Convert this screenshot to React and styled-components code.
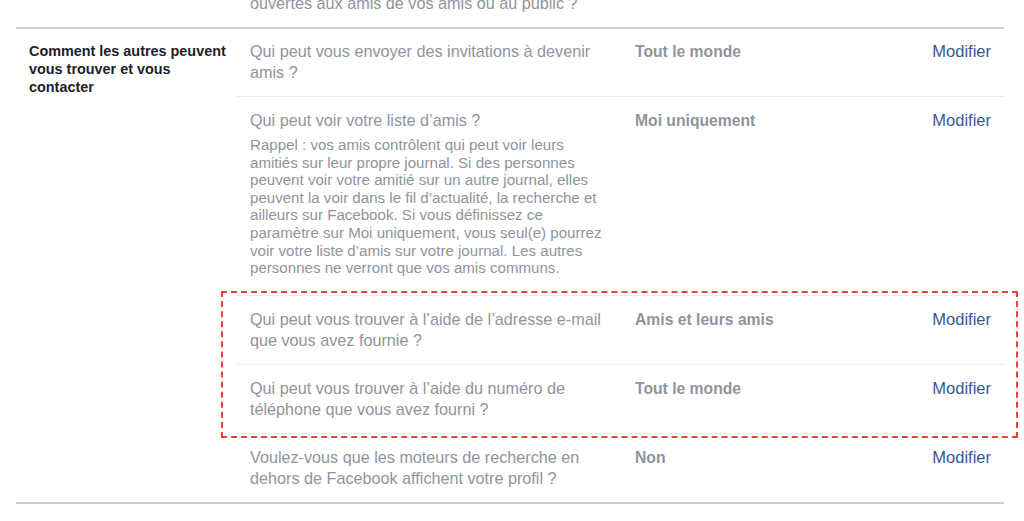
import React from 'react';
import styled, { createGlobalStyle } from 'styled-components';

const GlobalStyle = createGlobalStyle`
  html, body {
    margin: 0;
    padding: 0;
    background: #ffffff;
    overflow: hidden;
  }
  body {
    font-family: "Liberation Sans", Arial, Helvetica, sans-serif;
    -webkit-font-smoothing: antialiased;
  }
`;

const Page = styled.div`
  margin: -20px 20px 0 16px;
  width: 988px;
`;

const Section = styled.div`
  display: flex;
  border-bottom: 2px solid #cfcfd1;
`;

const SectionTitle = styled.div`
  width: 221px;
  flex-shrink: 0;
  box-sizing: border-box;
  padding: 13px 10px 0 13px;
  font-size: 14.4px;
  line-height: 18px;
  font-weight: 700;
  color: #1d2129;
`;

const Rows = styled.div`
  flex: 1;
  display: flex;
  flex-direction: column;
`;

const Row = styled.div`
  display: grid;
  grid-template-columns: 362px 1fr auto;
  column-gap: 23px;
  padding: 13px 13px;
  border-top: 1px solid #e9ebee;
  ${(p) => (p.$first ? 'border-top: none; padding-top: 12px;' : '')}
`;

const Question = styled.div`
  font-size: 16.2px;
  line-height: 21px;
  color: #90949c;
`;

const Hint = styled.div`
  margin: 5px 0 5px;
  font-size: 15.1px;
  line-height: 17.6px;
  color: #90949c;
  white-space: nowrap;
`;

const HintLine = styled.span`
  display: block;
`;

const Value = styled.div`
  font-size: 15.7px;
  line-height: 21px;
  font-weight: 700;
  color: #90949c;
`;

const EditLink = styled.a`
  font-size: 16.5px;
  line-height: 21px;
  color: #365899;
  text-decoration: none;
  cursor: pointer;
  &:hover {
    text-decoration: underline;
  }
`;

const Highlight = styled.div`
  position: relative;
  &::before {
    content: '';
    position: absolute;
    top: -4px;
    left: -16px;
    right: -14px;
    bottom: -5px;
    border: 2px dashed #e2463b;
    pointer-events: none;
  }
`;

const friendsHint = [
  'Rappel : vos amis contrôlent qui peut voir leurs',
  'amitiés sur leur propre journal. Si des personnes',
  'peuvent voir votre amitié sur un autre journal, elles',
  'peuvent la voir dans le fil d’actualité, la recherche et',
  'ailleurs sur Facebook. Si vous définissez ce',
  'paramètre sur Moi uniquement, vous seul(e) pourrez',
  'voir votre liste d’amis sur votre journal. Les autres',
  'personnes ne verront que vos amis communs.',
];

function SettingRow({ first, question, hint, value }) {
  return (
    <Row $first={first}>
      <div>
        <Question>{question}</Question>
        {hint && (
          <Hint>
            {hint.map((line) => (
              <HintLine key={line}>{line}</HintLine>
            ))}
          </Hint>
        )}
      </div>
      <Value>{value}</Value>
      <EditLink>Modifier</EditLink>
    </Row>
  );
}

export default function App() {
  return (
    <>
      <GlobalStyle />
      <Page>
        <Section>
          <SectionTitle />
          <Rows>
            <Row $first style={{ paddingTop: 13 }}>
              <Question>ouvertes aux amis de vos amis ou au public ?</Question>
              <Value />
              <span />
            </Row>
          </Rows>
        </Section>
        <Section>
          <SectionTitle>Comment les autres peuvent vous trouver et vous contacter</SectionTitle>
          <Rows>
            <SettingRow
              first
              question="Qui peut vous envoyer des invitations à devenir amis ?"
              value="Tout le monde"
            />
            <SettingRow
              question="Qui peut voir votre liste d’amis ?"
              hint={friendsHint}
              value="Moi uniquement"
            />
            <Highlight>
              <SettingRow
                question="Qui peut vous trouver à l’aide de l’adresse e-mail que vous avez fournie ?"
                value="Amis et leurs amis"
              />
              <SettingRow
                question="Qui peut vous trouver à l’aide du numéro de téléphone que vous avez fourni ?"
                value="Tout le monde"
              />
            </Highlight>
            <SettingRow
              question="Voulez-vous que les moteurs de recherche en dehors de Facebook affichent votre profil ?"
              value="Non"
            />
          </Rows>
        </Section>
      </Page>
    </>
  );
}
